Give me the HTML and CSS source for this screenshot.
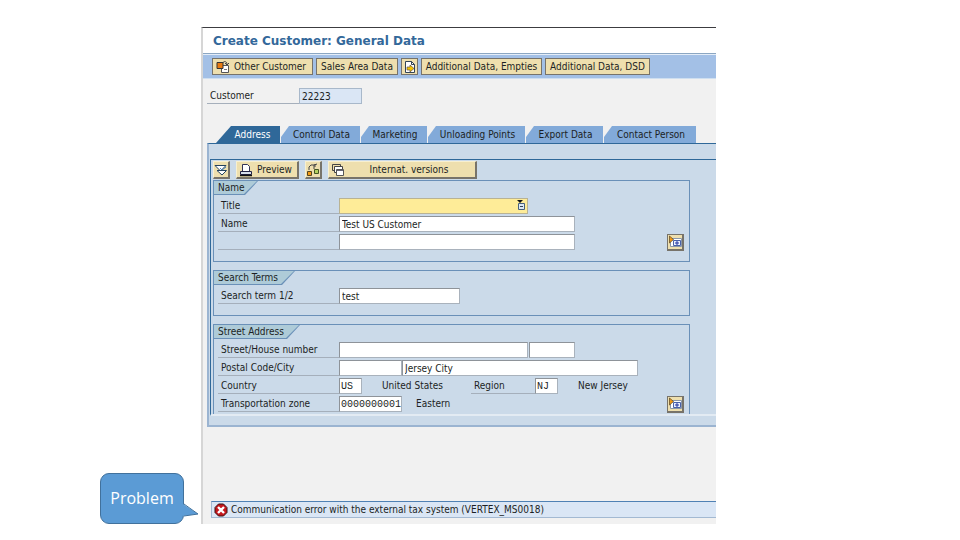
FILE: index.html
```html
<!DOCTYPE html>
<html lang="en">
<head>
<meta charset="utf-8">
<title>Create Customer: General Data</title>
<link rel="stylesheet" href="styles.css">
</head>
<body>
<div class="slide">
  <aside class="notes">
    <div class="callout">
      Problem
      <svg class="tail" viewBox="0 0 15 16" aria-hidden="true"><path class="tail-fill" d="M0 2 15 12 0 14Z"/><path class="tail-line" d="M1 2 15 12 1 14"/></svg>
    </div>
  </aside>
  <main class="app">
    <h1 class="title">Create Customer: General Data</h1>
    <div class="toolbar">
      <button class="tool other" type="button">
        <svg class="icon" viewBox="0 0 14 14" aria-hidden="true"><path d="M5.500 5.500h7v7h-7z" fill="#fff" stroke="#555"/><path d="M1 2.500h6v6H1z" fill="#e87a10" stroke="#333"/><path d="M7 3c0-2 4-2 4 1M9 3l2 2 2-2" fill="none" stroke="#444"/><path d="M8 9.500h3" stroke="#777"/></svg>
        Other Customer</button>
      <button class="tool sales" type="button">Sales Area Data</button>
      <button class="tool square" type="button" aria-label="Account group">
        <svg class="icon" viewBox="0 0 14 14" aria-hidden="true"><path d="M2.500 1.500h6l3 3v8h-9z" fill="#fff" stroke="#345"/><path d="M8.500 1.500v3h3" fill="none" stroke="#345"/><path d="M4 7h3V5l4 3.500L7 12v-2H4z" fill="#f5c400" stroke="#654" stroke-width=".7"/></svg>
      </button>
      <button class="tool empties" type="button">Additional Data, Empties</button>
      <button class="tool dsd" type="button">Additional Data, DSD</button>
    </div>
    <div class="row customer">
      <label class="label" for="customer">Customer</label>
      <input class="field readonly" id="customer" value="22223" readonly>
    </div>
    <div class="tabs" role="tablist">
      <button class="tab active" role="tab" type="button" aria-selected="true">Address</button>
      <button class="tab control" role="tab" type="button">Control Data</button>
      <button class="tab marketing" role="tab" type="button">Marketing</button>
      <button class="tab unloading" role="tab" type="button">Unloading Points</button>
      <button class="tab export" role="tab" type="button">Export Data</button>
      <button class="tab contact" role="tab" type="button">Contact Person</button>
    </div>
    <div class="panel">
      <form class="sheet">
        <div class="actions">
          <button class="action square" type="button" aria-label="Collapse">
            <svg class="icon" viewBox="0 0 14 14" aria-hidden="true"><path d="M1 2.500h11L6.500 8z" fill="#fff" stroke="#24435f"/><path d="M3 7.500h9.500L8 12z" fill="#fff" stroke="#24435f"/><path d="M6 5l2 2 4-3" fill="none" stroke="#4a80b5"/></svg>
          </button>
          <button class="action preview" type="button">
            <svg class="icon" viewBox="0 0 14 14" aria-hidden="true"><path d="M3.500 1.500h5l2 2v5h-7z" fill="#fff" stroke="#335"/><path d="M1.500 8.500h11v3h-11z" fill="#d7dfec" stroke="#224"/><path d="M1 12.500h12" stroke="#111" stroke-width="1.500"/></svg>
            Preview</button>
          <button class="action square link" type="button" aria-label="Relationships">
            <svg class="icon" viewBox="0 0 14 14" aria-hidden="true"><path d="M1.500 8.500h4v4h-4z" fill="#f29a16" stroke="#542"/><path d="M8.500 6.500h4v4h-4z" fill="#b4cf61" stroke="#452"/><path d="M3 7V4l2-2h3v4M8 2l3-1M9 1v3" fill="none" stroke="#444"/></svg>
          </button>
          <button class="action versions" type="button">
            <svg class="icon" viewBox="0 0 14 14" aria-hidden="true"><path d="M1.500 1.500h8v6h-8z" fill="#f0dfab" stroke="#444"/><path d="M3.500 3.500h8v6h-8z" fill="#fff" stroke="#444"/><path d="M5.500 6.500h7v6h-7z" fill="#fff" stroke="#555"/><path d="M6 7.500h6" stroke="#667"/></svg>
            <span class="grow">Internat. versions</span></button>
        </div>

        <section class="group name-group">
          <h2 class="legend name-legend"><span>Name</span></h2>
          <div class="row">
            <label class="label" for="title">Title</label>
            <span class="drop">
              <select class="field wide title-field" id="title"><option></option></select>
              <svg class="drop-icon" viewBox="0 0 10 10" aria-hidden="true"><path d="M1 0h6L4 3z" fill="#111"/><path d="M2.500 3.500h6v6h-6z" fill="#dce8f4" stroke="#46617c"/><path d="M4 6.500h3" stroke="#345"/></svg>
            </span>
          </div>
          <div class="row">
            <label class="label" for="name1">Name</label>
            <input class="field full" id="name1" value="Test US Customer">
          </div>
          <div class="row">
            <span class="label"></span>
            <input class="field full" aria-label="Name 2">
            <button class="more" type="button" aria-label="More name fields">
              <svg class="icon" viewBox="0 0 14 14" aria-hidden="true"><path d="M2.500 3.500h11v8h-11z" fill="#fff" stroke="#8b97a8"/><path d="M5.500 5.500h7v5h-7z" fill="#e9efff" stroke="#4961a8"/><path d="M7 8h4M9 6v4" stroke="#2033a0"/><path d="M1.500 1v7l4-3.500z" fill="#f29a16" stroke="#542" stroke-width=".7"/></svg>
            </button>
          </div>
        </section>

        <section class="group search-group">
          <h2 class="legend search-legend"><span>Search Terms</span></h2>
          <div class="row">
            <label class="label" for="term">Search term 1/2</label>
            <input class="field term" id="term" value="test">
          </div>
        </section>

        <section class="group street-group">
          <h2 class="legend street-legend"><span>Street Address</span></h2>
          <div class="row">
            <label class="label" for="street">Street/House number</label>
            <input class="field wide" id="street">
            <input class="field house" aria-label="House number">
          </div>
          <div class="row">
            <label class="label" for="postal">Postal Code/City</label>
            <input class="field code" id="postal">
            <input class="field city" aria-label="City" value="Jersey City">
          </div>
          <div class="row">
            <label class="label" for="country">Country</label>
            <input class="field mono short" id="country" value="US">
            <output class="text country-text">United States</output>
            <label class="label region" for="region">Region</label>
            <input class="field mono short" id="region" value="NJ">
            <output class="text region-text">New Jersey</output>
          </div>
          <div class="row">
            <label class="label" for="zone">Transportation zone</label>
            <input class="field mono code" id="zone" value="0000000001">
            <output class="text zone-text">Eastern</output>
            <button class="more" type="button" aria-label="More address fields">
              <svg class="icon" viewBox="0 0 14 14" aria-hidden="true"><path d="M2.500 3.500h11v8h-11z" fill="#fff" stroke="#8b97a8"/><path d="M5.500 5.500h7v5h-7z" fill="#e9efff" stroke="#4961a8"/><path d="M7 8h4M9 6v4" stroke="#2033a0"/><path d="M1.500 1v7l4-3.500z" fill="#f29a16" stroke="#542" stroke-width=".7"/></svg>
            </button>
          </div>
        </section>
      </form>
    </div>
    <div class="status" role="status">
      <svg class="icon" viewBox="0 0 14 14" aria-hidden="true"><path d="M4.500 1h5L13 4.500v5L9.500 13h-5L1 9.500v-5z" fill="#c4161c" stroke="#3a1010"/><path d="M4 4l6 6M10 4l-6 6" stroke="#fff" stroke-width="2.400"/></svg>
      Communication error with the external tax system (VERTEX_MS0018)
    </div>
  </main>
</div>
</body>
</html>
```
FILE: styles.css
```css
* { box-sizing: border-box; }
body {
  margin: 0;
  background: #fff;
  color: #1c1f24;
  font: 10px/14px "DejaVu Sans Condensed", "DejaVu Sans", sans-serif;
}
button, input, select { font: inherit; color: inherit; margin: 0; border-radius: 0; }
.slide {
  display: grid;
  grid-template-columns: 201fr 515fr 244fr;
  padding: 27px 0 16px;
}
.icon { width: 14px; height: 14px; flex: none; display: block; }

.notes { display: flex; justify-content: flex-end; align-items: flex-end; padding-right: 17px; }
.callout {
  position: relative;
  width: 84px;
  height: 51px;
  border: 1px solid #41719c;
  border-radius: 9px;
  background: #5b9bd5;
  color: #fff;
  font: 16px/49px "Open Sans", sans-serif;
  text-align: center;
}
.tail { position: absolute; left: 100%; top: 28px; width: 15px; height: 16px; }
.tail-fill { fill: #5b9bd5; }
.tail-line { fill: none; stroke: #41719c; }

.app {
  min-width: 0;
  background: #f1f1f1;
  border-top: 1px solid #3c3c40;
  border-left: 2px solid #d6d6d6;
  padding-bottom: 6px;
}
.title {
  margin: 0;
  padding-left: 10px;
  height: 26px;
  background: #fff;
  border-bottom: 1px solid #8ba6c2;
  color: #33689a;
  font: bold 12px/27px "DejaVu Sans", sans-serif;
}
.toolbar {
  display: flex;
  align-items: center;
  gap: 3px;
  height: 25px;
  padding-left: 9px;
  background: #a3c0e6;
  border-top: 1px solid #e4edf8;
  border-bottom: 1px solid #cfdff0;
}
.tool {
  display: flex;
  align-items: center;
  justify-content: center;
  gap: 4px;
  height: 17px;
  padding: 0;
  background: #eedfae;
  border: 1px solid #77736a;
  white-space: nowrap;
}
.other { width: 101px; padding-right: 3px; }
.sales { width: 82px; }
.empties { width: 121px; }
.dsd { width: 105px; }
.square { width: 17px; }

.row { display: flex; height: 18px; align-items: flex-start; }
.label {
  flex: none;
  width: 121px;
  height: 16px;
  line-height: 16px;
  padding-left: 3px;
  border-bottom: 1px solid #a5afbb;
  white-space: nowrap;
}
.field {
  height: 16px;
  padding: 0 2px;
  background: #fff;
  border: 1px solid #a9b2bc;
  border-top-color: #8e9399;
  border-left-color: #8e9399;
  outline: 0;
}
.customer { margin: 9px 0 20px 4px; }
.customer .label { width: 92px; }
.readonly { width: 63px; background: #dae6f5; border-color: #a8b8ca; }

.tabs { display: flex; gap: 1px; padding-left: 13px; height: 17px; }
.tab {
  padding: 0 0 0 2px;
  border: 0;
  background: #82aad9;
  clip-path: polygon(0 100%, 0 65%, 8px 0, 100% 0, 100% 100%);
  line-height: 17px;
  white-space: nowrap;
}
.tab.active {
  width: 64px;
  padding-left: 9px;
  background: #2f6899;
  color: #fff;
  clip-path: polygon(0 100%, 15px 0, 100% 0, 100% 100%);
}
.control { width: 79px; }
.marketing { width: 66px; }
.unloading { width: 97px; }
.export { width: 77px; }
.contact { width: 92px; }

.panel {
  margin-left: 4px;
  padding: 15px 0 9px 1px;
  background: #cbdae9;
  border-top: 1px solid #2f6899;
  border-left: 2px solid #9bb4d1;
  border-bottom: 2px solid #9bb4d1;
}
.sheet {
  padding: 1px 26px 0 2px;
  border-top: 1px solid #2f6899;
  border-left: 1px solid #2f6899;
  border-bottom: 2px solid #e3ebf3;
}
.actions { display: flex; height: 19px; }
.action {
  display: flex;
  align-items: center;
  height: 18px;
  padding: 0;
  background: #eedfae;
  border: 1px solid #f8f0d0;
  border-right: 2px solid #77736a;
  border-bottom: 2px solid #77736a;
  white-space: nowrap;
}
.preview { width: 63px; margin: 0 6px; padding-left: 2px; gap: 4px; }
.versions { width: 149px; margin-left: 6px; padding-left: 2px; }
.grow { flex: 1; text-align: center; padding-right: 2px; }

.group {
  border: 1px solid #6a90b8;
  padding: 0 5px 0 4px;
}
.name-group { height: 82px; margin-bottom: 8px; }
.search-group { height: 46px; margin-bottom: 8px; }
.street-group { height: 90px; border-bottom: 0; }
.legend {
  margin: 0 0 3px -4px;
  height: 14px;
  padding-right: 1px;
  background: #6a90b8;
  font: inherit;
  clip-path: polygon(0 0, 100% 0, calc(100% - 13px) 100%, 0 100%);
}
.legend span {
  display: block;
  height: 13px;
  padding-left: 4px;
  line-height: 13px;
  background: #aecbd8;
  clip-path: polygon(0 0, 100% 0, calc(100% - 13px) 100%, 0 100%);
}
.name-legend { width: 44px; }
.search-legend { width: 81px; }
.street-legend { width: 86px; }

.drop { position: relative; display: flex; }
.title-field {
  appearance: none;
  background: #feec98;
  border-color: #b9b394;
}
.drop-icon { position: absolute; right: 2px; top: 2px; width: 10px; height: 10px; pointer-events: none; }
.wide { width: 189px; }
.full { width: 236px; }
.term { width: 121px; }
.house { width: 46px; margin-left: 1px; }
.code { width: 63px; }
.city { width: 236px; }
.short { width: 23px; }
.mono { padding: 0 0 0 1px; font-family: "Liberation Mono", monospace; }
.text { line-height: 16px; white-space: nowrap; }
.country-text { width: 109px; padding-left: 20px; }
.region { width: 64px; }
.region-text { padding-left: 20px; }
.zone-text { padding-left: 14px; }
.more {
  width: 17px;
  height: 17px;
  margin-left: auto;
  padding: 0;
  background: #eedfae;
  border: 1px solid #77736a;
  border-right-width: 2px;
  border-bottom-width: 2px;
}

.status {
  display: flex;
  align-items: center;
  gap: 3px;
  height: 17px;
  margin: 74px 0 0 8px;
  padding-left: 2px;
  background: #dae6f5;
  border: 1px solid #a3b9d2;
  border-top-color: #4f81b4;
  border-right: 0;
  white-space: nowrap;
}
```
